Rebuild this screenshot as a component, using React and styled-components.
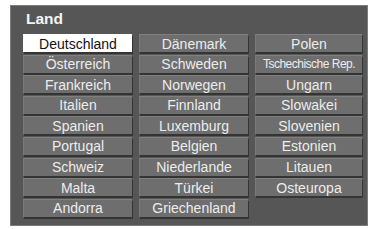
import React, { useState } from 'react'
import styled, { createGlobalStyle } from 'styled-components'

const GlobalStyle = createGlobalStyle`
  html, body {
    margin: 0;
    padding: 0;
    background: #ffffff;
  }
  body {
    font-family: "Liberation Sans", Arial, sans-serif;
  }
`

const countries = [
  'Deutschland', 'Österreich', 'Frankreich', 'Italien', 'Spanien', 'Portugal', 'Schweiz', 'Malta', 'Andorra',
  'Dänemark', 'Schweden', 'Norwegen', 'Finnland', 'Luxemburg', 'Belgien', 'Niederlande', 'Türkei', 'Griechenland',
  'Polen', 'Tschechische Rep.', 'Ungarn', 'Slowakei', 'Slovenien', 'Estonien', 'Litauen', 'Osteuropa'
]

const App = () => {
  const [selected, setSelected] = useState('Deutschland')
  return (
    <>
      <GlobalStyle />
      <Panel>
        <Title>Land</Title>
        <Grid>
          {countries.map((name) => (
            <CountryButton
              key={name}
              $active={selected === name}
              $small={name.length > 14}
              onClick={() => setSelected(name)}
            >
              {name}
            </CountryButton>
          ))}
        </Grid>
      </Panel>
    </>
  )
}

export default App

const Panel = styled.div`
  box-sizing: border-box;
  margin: 5px 0 0 10px;
  width: 358px;
  height: 221px;
  background: #565656;
  border: 1px solid #7c7c7c;
  padding: 0 0 0 12px;
`

const Title = styled.div`
  height: 28px;
  line-height: 26px;
  padding-left: 3px;
  color: #f4f4f4;
  font-size: 15.5px;
  font-weight: 700;
`

const Grid = styled.div`
  display: grid;
  grid-template-columns: 109px 109px 107px;
  grid-template-rows: repeat(9, 18px);
  grid-auto-flow: column;
  column-gap: 7px;
  row-gap: 2.6px;
`

const CountryButton = styled.div`
  box-sizing: border-box;
  display: flex;
  align-items: center;
  justify-content: center;
  background: ${(p) => (p.$active ? '#ffffff' : '#6e6e6e')};
  color: ${(p) => (p.$active ? '#111111' : '#ececec')};
  font-size: ${(p) => (p.$small ? '12px' : '14px')};
  letter-spacing: ${(p) => (p.$small ? '-0.5px' : '0')};
  border-top: 1px solid ${(p) => (p.$active ? '#ffffff' : '#808080')};
  border-left: 1px solid ${(p) => (p.$active ? '#ffffff' : '#7a7a7a')};
  box-shadow: 1px 2px 0 #343434;
  white-space: nowrap;
  cursor: pointer;
`
